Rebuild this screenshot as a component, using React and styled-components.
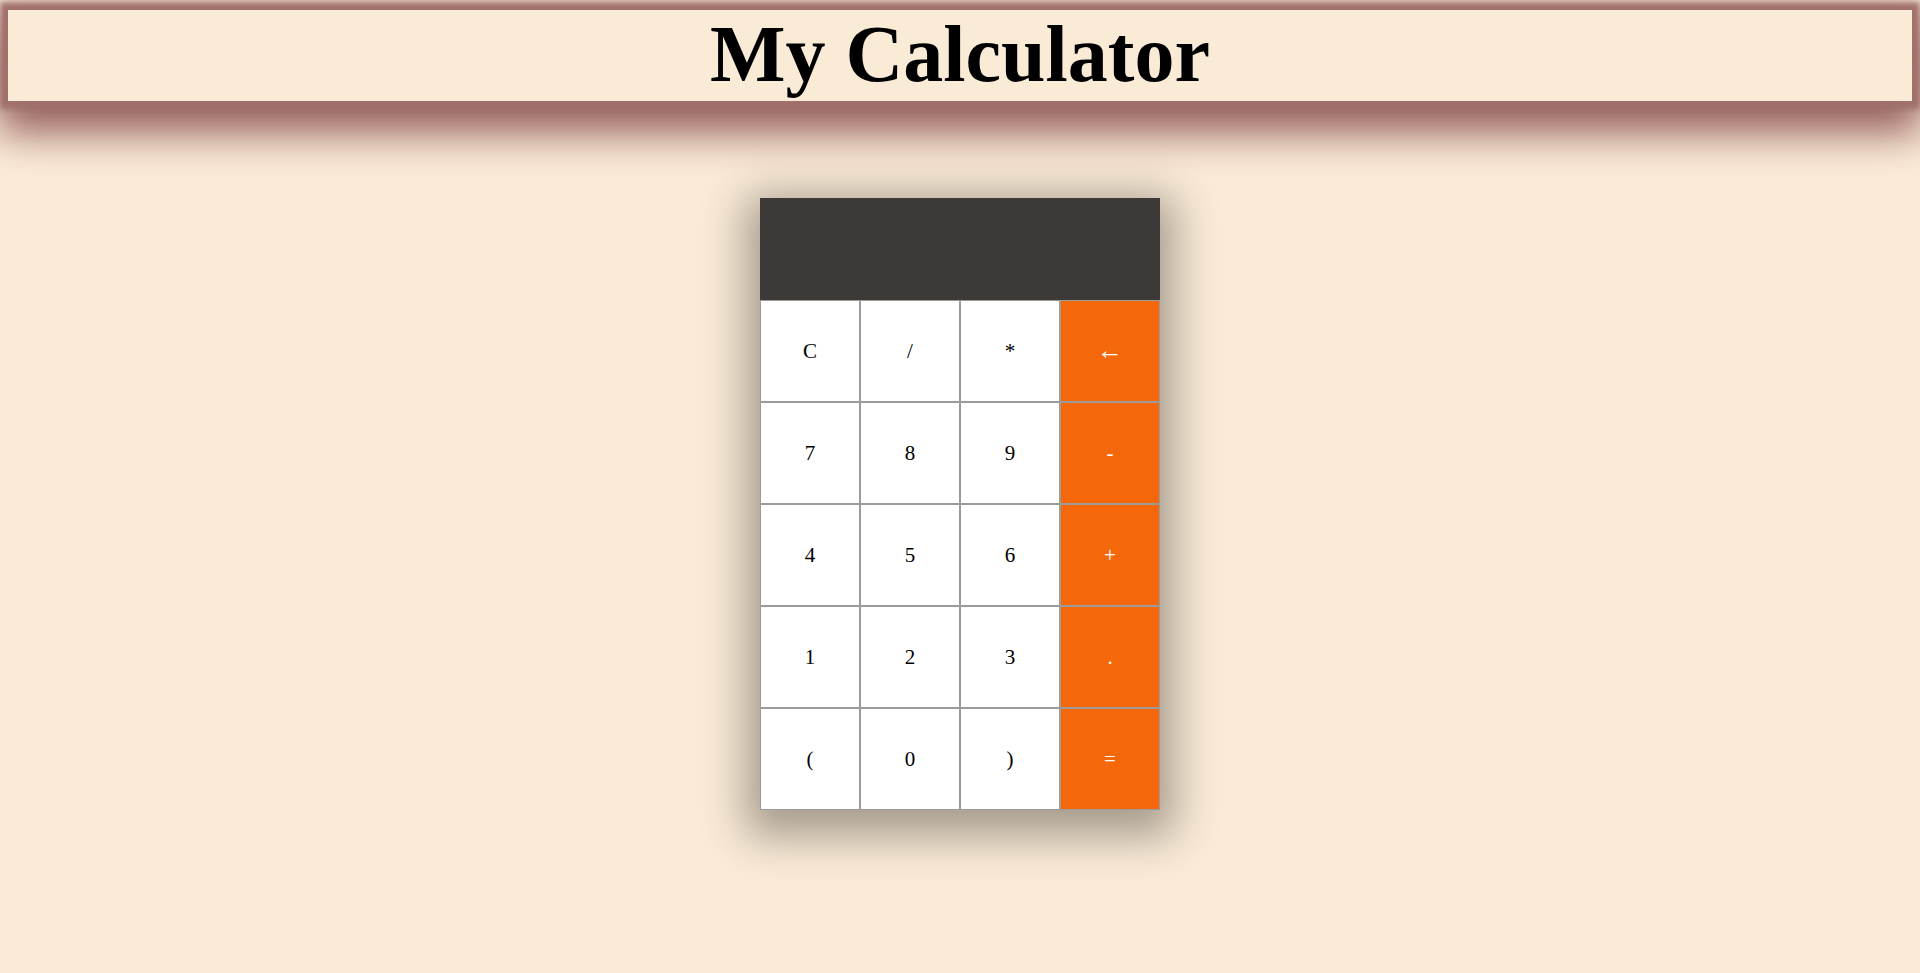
import styled, { createGlobalStyle } from "styled-components";

const GlobalStyle = createGlobalStyle`
  html, body {
    margin: 0;
    padding: 0;
    background: #faebd7;
  }
  body {
    padding: 10px 8px 0 8px;
    min-height: 973px;
    box-sizing: border-box;
    font-family: "Liberation Serif", "Times New Roman", serif;
  }
`;

const Header = styled.header`
  height: 91px;
  background: #faebd7;
  display: flex;
  align-items: center;
  justify-content: center;
  box-shadow: 0 0 6px 8px rgba(160, 112, 108, 1),
    0 22px 40px 10px rgba(150, 96, 94, 1);
`;

const Title = styled.h1`
  margin: 0;
  padding-bottom: 4px;
  font-family: "Liberation Serif", "Times New Roman", serif;
  font-weight: bold;
  font-size: 80px;
  line-height: 1;
  color: #000;
`;

const Main = styled.main`
  display: flex;
  justify-content: center;
  padding-top: 97px;
`;

const Calculator = styled.div`
  width: 400px;
  box-shadow: 0 12px 40px 14px rgba(50, 45, 40, 0.42);
`;

const Display = styled.div`
  height: 102px;
  background: #3d3936;
`;

const Keypad = styled.div`
  display: grid;
  grid-template-columns: repeat(4, 1fr);
  grid-auto-rows: 102px;
`;

const Key = styled.button`
  margin: 0;
  padding: 0;
  border: 1px solid #9d9b99;
  border-radius: 0;
  background: ${(p) => (p.$op ? "#f4670b" : "#ffffff")};
  color: ${(p) => (p.$op ? "#ffffff" : "#000000")};
  font-family: "Liberation Serif", "Times New Roman", serif;
  font-size: ${(p) => (p.$big ? "26px" : "21px")};
  display: flex;
  align-items: center;
  justify-content: center;
  cursor: pointer;
`;

const rows = [
  ["C", "/", "*", "←"],
  ["7", "8", "9", "-"],
  ["4", "5", "6", "+"],
  ["1", "2", "3", "."],
  ["(", "0", ")", "="],
];

export default function App() {
  return (
    <>
      <GlobalStyle />
      <Header>
        <Title>My Calculator</Title>
      </Header>
      <Main>
        <Calculator>
          <Display />
          <Keypad>
            {rows.flat().map((k, i) => (
              <Key key={i} $op={i % 4 === 3} $big={k === "←"}>
                {k}
              </Key>
            ))}
          </Keypad>
        </Calculator>
      </Main>
    </>
  );
}
